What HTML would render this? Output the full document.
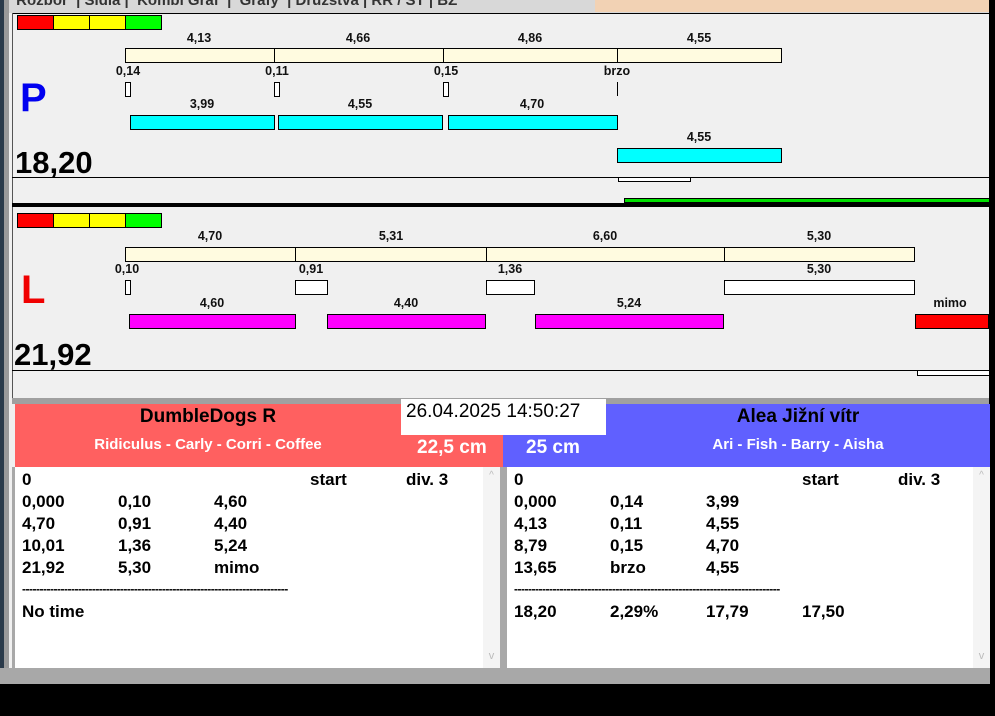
<!DOCTYPE html>
<html><head><meta charset="utf-8"><style>
*{margin:0;padding:0;box-sizing:border-box}
body{width:995px;height:716px;position:relative;overflow:hidden;background:#f0f0f0;font-family:"Liberation Sans",Arial,sans-serif}
div{position:absolute}
.b{border:1px solid #000}
.cr{background:#fffbe0}
.cy{background:#00ffff}
.mg{background:#ff00ff}
.w{background:#fff}
.l{font-size:12.5px;font-weight:bold;text-align:center;width:80px;margin-left:-40px;color:#111}
.t{font-size:17px;font-weight:bold;color:#000;white-space:nowrap}
.d{font-size:12px;font-weight:bold;letter-spacing:-0.5px;white-space:nowrap;overflow:hidden;width:270px;height:10px;line-height:8px}
</style></head><body>
<div style="left:0;top:0;width:995px;height:13px;background:#d8d8d8"></div>
<div style="left:595px;top:0;width:400px;height:12px;background:#f2d2b4"></div>
<div style="left:12px;top:0;width:580px;height:12px;font-size:15px;font-weight:bold;color:#333;line-height:2px;white-space:nowrap;overflow:hidden">&nbsp;Rozbor &nbsp;| Sidla | &nbsp;Kombi Graf &nbsp;| &nbsp;Grafy &nbsp;| Družstva | RR / ST | BZ</div>
<div style="left:0;top:0;width:4px;height:684px;background:#2a3a4a"></div>
<div style="left:4px;top:0;width:5px;height:684px;background:#9a9a9a"></div>
<div style="left:989px;top:0;width:6px;height:716px;background:#000"></div>
<div style="left:12px;top:13px;width:977px;height:1px;background:#000"></div>
<div style="left:12px;top:13px;width:1px;height:385px;background:#555"></div>

<div class="b" style="left:17px;top:15px;width:37px;height:15px;background:#f00"></div>
<div class="b" style="left:53px;top:15px;width:37px;height:15px;background:#ff0"></div>
<div class="b" style="left:89px;top:15px;width:37px;height:15px;background:#ff0"></div>
<div class="b" style="left:125px;top:15px;width:37px;height:15px;background:#0f0"></div>

<div class="l" style="left:199px;top:31px">4,13</div>
<div class="l" style="left:358px;top:31px">4,66</div>
<div class="l" style="left:530px;top:31px">4,86</div>
<div class="l" style="left:699px;top:31px">4,55</div>
<div class="b cr" style="left:125px;top:48px;width:150px;height:15px"></div>
<div class="b cr" style="left:274px;top:48px;width:170px;height:15px"></div>
<div class="b cr" style="left:443px;top:48px;width:175px;height:15px"></div>
<div class="b cr" style="left:617px;top:48px;width:165px;height:15px"></div>
<div class="l" style="left:128px;top:64px">0,14</div>
<div class="l" style="left:277px;top:64px">0,11</div>
<div class="l" style="left:446px;top:64px">0,15</div>
<div class="l" style="left:617px;top:64px">brzo</div>
<div class="b w" style="left:125px;top:82px;width:6px;height:15px"></div>
<div class="b w" style="left:274px;top:82px;width:6px;height:15px"></div>
<div class="b w" style="left:443px;top:82px;width:6px;height:15px"></div>
<div style="left:617px;top:82px;width:1px;height:14px;background:#000"></div>
<div class="l" style="left:202px;top:97px">3,99</div>
<div class="l" style="left:360px;top:97px">4,55</div>
<div class="l" style="left:532px;top:97px">4,70</div>
<div class="b cy" style="left:130px;top:115px;width:145px;height:15px"></div>
<div class="b cy" style="left:278px;top:115px;width:165px;height:15px"></div>
<div class="b cy" style="left:448px;top:115px;width:170px;height:15px"></div>
<div class="l" style="left:699px;top:130px">4,55</div>
<div class="b cy" style="left:617px;top:148px;width:165px;height:15px"></div>
<div style="left:20px;top:76px;font-size:40px;font-weight:bold;color:#0000f0">P</div>
<div style="left:15px;top:145px;font-size:31px;font-weight:bold;color:#000">18,20</div>
<div style="left:12px;top:177px;width:977px;height:1px;background:#000"></div>
<div class="b w" style="left:618px;top:177px;width:73px;height:5px"></div>
<div class="b" style="left:624px;top:198px;width:366px;height:5px;background:#00e000"></div>
<div style="left:12px;top:203px;width:977px;height:4px;background:#000"></div>

<div class="b" style="left:17px;top:213px;width:37px;height:15px;background:#f00"></div>
<div class="b" style="left:53px;top:213px;width:37px;height:15px;background:#ff0"></div>
<div class="b" style="left:89px;top:213px;width:37px;height:15px;background:#ff0"></div>
<div class="b" style="left:125px;top:213px;width:37px;height:15px;background:#0f0"></div>
<div class="l" style="left:210px;top:229px">4,70</div>
<div class="l" style="left:391px;top:229px">5,31</div>
<div class="l" style="left:605px;top:229px">6,60</div>
<div class="l" style="left:819px;top:229px">5,30</div>
<div class="b cr" style="left:125px;top:247px;width:171px;height:15px"></div>
<div class="b cr" style="left:295px;top:247px;width:192px;height:15px"></div>
<div class="b cr" style="left:486px;top:247px;width:239px;height:15px"></div>
<div class="b cr" style="left:724px;top:247px;width:191px;height:15px"></div>
<div class="l" style="left:127px;top:262px">0,10</div>
<div class="l" style="left:311px;top:262px">0,91</div>
<div class="l" style="left:510px;top:262px">1,36</div>
<div class="l" style="left:819px;top:262px">5,30</div>
<div class="b w" style="left:125px;top:280px;width:6px;height:15px"></div>
<div class="b w" style="left:295px;top:280px;width:33px;height:15px"></div>
<div class="b w" style="left:486px;top:280px;width:49px;height:15px"></div>
<div class="b w" style="left:724px;top:280px;width:191px;height:15px"></div>
<div class="l" style="left:212px;top:296px">4,60</div>
<div class="l" style="left:406px;top:296px">4,40</div>
<div class="l" style="left:629px;top:296px">5,24</div>
<div class="l" style="left:950px;top:296px">mimo</div>
<div class="b mg" style="left:129px;top:314px;width:167px;height:15px"></div>
<div class="b mg" style="left:327px;top:314px;width:159px;height:15px"></div>
<div class="b mg" style="left:535px;top:314px;width:189px;height:15px"></div>
<div class="b" style="left:915px;top:314px;width:74px;height:15px;background:#f00"></div>
<div style="left:21px;top:268px;font-size:40px;font-weight:bold;color:#f00000">L</div>
<div style="left:14px;top:337px;font-size:31px;font-weight:bold;color:#000">21,92</div>
<div style="left:12px;top:370px;width:977px;height:1px;background:#000"></div>
<div class="b w" style="left:917px;top:370px;width:73px;height:6px"></div>

<div style="left:12px;top:398px;width:977px;height:6px;background:#a0a0a0"></div>
<div style="left:15px;top:404px;width:488px;height:63px;background:#ff6060"></div>
<div style="left:503px;top:404px;width:487px;height:63px;background:#6060ff"></div>
<div style="left:15px;top:405px;width:386px;text-align:center;font-size:19px;font-weight:bold;line-height:24px">DumbleDogs R</div>
<div style="left:15px;top:436px;width:386px;text-align:center;font-size:15px;font-weight:bold;color:#fff">Ridiculus - Carly - Corri - Coffee</div>
<div style="left:401px;top:399px;width:205px;height:36px;background:#fff;font-size:19px;padding:2px 0 0 5px">26.04.2025 14:50:27</div>
<div style="left:417px;top:437px;font-size:19px;font-weight:bold;color:#fff">22,5 cm</div>
<div style="left:526px;top:437px;font-size:19px;font-weight:bold;color:#fff">25 cm</div>
<div style="left:606px;top:405px;width:384px;text-align:center;font-size:19px;font-weight:bold;line-height:24px">Alea Jižní vítr</div>
<div style="left:606px;top:436px;width:384px;text-align:center;font-size:15px;font-weight:bold;color:#fff">Ari - Fish - Barry - Aisha</div>

<div style="left:12px;top:467px;width:978px;height:201px;background:#a8a8a8"></div>
<div style="left:15px;top:467px;width:485px;height:201px;background:#fff"></div>
<div style="left:483px;top:467px;width:17px;height:201px;background:#f4f4f4;color:#bbb;font-size:10px;text-align:center;line-height:18px">^</div>
<div style="left:507px;top:467px;width:483px;height:201px;background:#fff"></div>
<div style="left:973px;top:467px;width:17px;height:201px;background:#f4f4f4;color:#bbb;font-size:10px;text-align:center;line-height:18px">^</div>
<div style="left:483px;top:650px;width:17px;font-size:11px;color:#bbb;text-align:center">v</div>
<div style="left:973px;top:650px;width:17px;font-size:11px;color:#bbb;text-align:center">v</div>

<div class="t" style="left:22px;top:470px">0</div><div class="t" style="left:310px;top:470px">start</div><div class="t" style="left:406px;top:470px">div. 3</div>
<div class="t" style="left:22px;top:492px">0,000</div><div class="t" style="left:118px;top:492px">0,10</div><div class="t" style="left:214px;top:492px">4,60</div>
<div class="t" style="left:22px;top:514px">4,70</div><div class="t" style="left:118px;top:514px">0,91</div><div class="t" style="left:214px;top:514px">4,40</div>
<div class="t" style="left:22px;top:536px">10,01</div><div class="t" style="left:118px;top:536px">1,36</div><div class="t" style="left:214px;top:536px">5,24</div>
<div class="t" style="left:22px;top:558px">21,92</div><div class="t" style="left:118px;top:558px">5,30</div><div class="t" style="left:214px;top:558px">mimo</div>
<div class="d" style="left:22px;top:585px">----------------------------------------------------------------------------</div>
<div class="t" style="left:22px;top:602px">No time</div>

<div class="t" style="left:514px;top:470px">0</div><div class="t" style="left:802px;top:470px">start</div><div class="t" style="left:898px;top:470px">div. 3</div>
<div class="t" style="left:514px;top:492px">0,000</div><div class="t" style="left:610px;top:492px">0,14</div><div class="t" style="left:706px;top:492px">3,99</div>
<div class="t" style="left:514px;top:514px">4,13</div><div class="t" style="left:610px;top:514px">0,11</div><div class="t" style="left:706px;top:514px">4,55</div>
<div class="t" style="left:514px;top:536px">8,79</div><div class="t" style="left:610px;top:536px">0,15</div><div class="t" style="left:706px;top:536px">4,70</div>
<div class="t" style="left:514px;top:558px">13,65</div><div class="t" style="left:610px;top:558px">brzo</div><div class="t" style="left:706px;top:558px">4,55</div>
<div class="d" style="left:514px;top:585px">----------------------------------------------------------------------------</div>
<div class="t" style="left:514px;top:602px">18,20</div><div class="t" style="left:610px;top:602px">2,29%</div><div class="t" style="left:706px;top:602px">17,79</div><div class="t" style="left:802px;top:602px">17,50</div>

<div style="left:0;top:668px;width:990px;height:16px;background:#a8a8a8"></div>
<div style="left:0;top:684px;width:995px;height:32px;background:#000"></div>
</body></html>
